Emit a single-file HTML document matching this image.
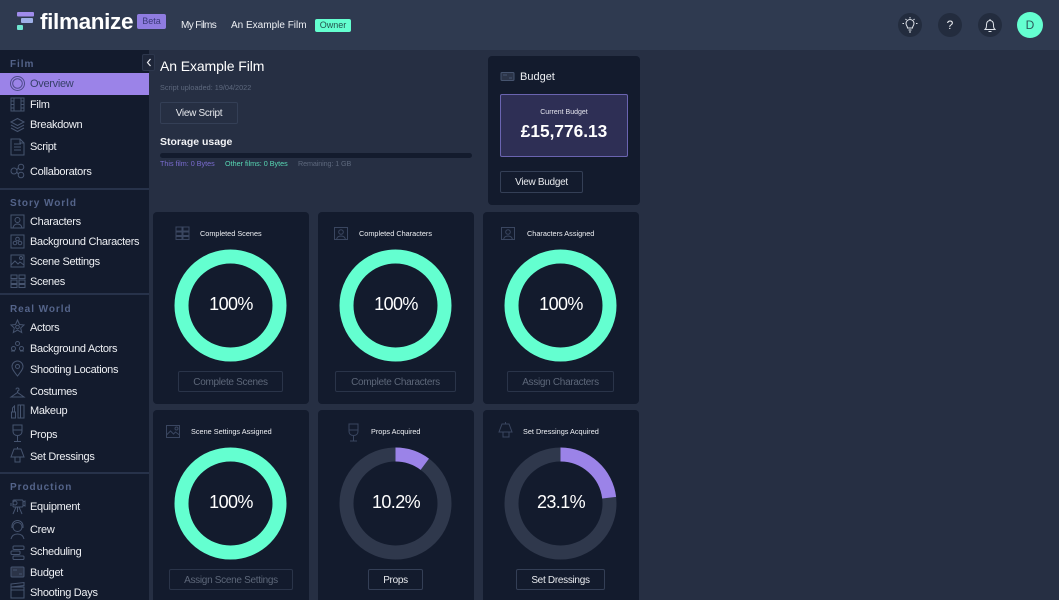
<!DOCTYPE html>
<html><head><meta charset="utf-8"><style>
*{box-sizing:border-box}
html,body{margin:0;padding:0;width:1059px;height:600px;overflow:hidden;background:#262f43;font-family:"Liberation Sans",sans-serif;color:#fff}
#w{position:relative;width:1059px;height:600px;overflow:hidden}
.a{position:absolute;white-space:nowrap}
.nav{position:absolute;left:30px;height:16px;line-height:16px;font-size:11px;color:#eef0f4;white-space:nowrap;letter-spacing:-.3px;margin-top:1px}
.h{position:absolute;left:10px;height:14px;line-height:14px;font-size:10px;font-weight:bold;letter-spacing:.95px;color:#54648a;white-space:nowrap}
.div{position:absolute;left:0;width:149px;height:2px;background:#27324a}
.card{position:absolute;background:#131b2d;border-radius:4px;width:156px}
.btn{position:absolute;border:1px solid #343f56;border-radius:2px;text-align:center;font-size:10px;letter-spacing:-.3px;height:21px;line-height:21px;white-space:nowrap;color:#e8eaee}
.btn.dis{color:#5d6779;border-color:#2a3449}
.ct{position:absolute;font-size:7.3px;height:10px;line-height:10px;color:#eef0f4;white-space:nowrap}
.pct{position:absolute;width:112px;text-align:center;font-size:18px;letter-spacing:-.6px;height:24px;line-height:24px;color:#fff}
</style></head><body><div id="w">
<!-- topbar -->
<div class="a" style="left:0;top:0;width:1059px;height:50px;background:#2f3a50"></div>
<svg class="a" style="left:16px;top:11px" width="20" height="20"><rect x="1" y="1" width="17" height="4.500" rx="1" fill="#a08cec"/><rect x="5" y="7" width="12" height="5" rx="1" fill="#9fb0e8"/><rect x="1" y="14" width="6" height="5" rx="1" fill="#6fe6d0"/></svg>
<div class="a" style="left:40px;top:8px;font-size:22.500px;font-weight:bold;line-height:28px;letter-spacing:-.35px;color:#fff">filmanize</div>
<div class="a" style="left:137px;top:14px;width:29px;height:15px;background:#8f7ce0;border-radius:2px;color:#3a3a78;font-size:9px;line-height:15px;text-align:center">Beta</div>
<div class="a" style="left:181px;top:19px;font-size:10px;line-height:14px;color:#eef0f4;letter-spacing:-.6px">My Films</div>
<div class="a" style="left:231px;top:19px;font-size:10px;line-height:14px;color:#eef0f4">An Example Film</div>
<div class="a" style="left:315px;top:19px;width:36px;height:13px;background:#64ffd0;border-radius:2px;color:#24534e;font-size:9px;line-height:13px;text-align:center">Owner</div>
<div class="a" style="left:898px;top:13px;width:24px;height:24px;border-radius:50%;background:#232c3e"></div>
<svg class="a" style="left:898px;top:13px" width="24" height="24" fill="none" stroke="#dfe3ea" stroke-width="1"><path d="M9.500 15c0-2-1.500-2.500-1.500-4.500a4 4 0 0 1 8 0c0 2-1.500 2.500-1.500 4.500z"/><path d="M10.500 17h3M11 19h2M12 4v1.500M6 10.500h-1.500M19.500 10.500H18M7.500 6l1 1M16.500 6l-1 1"/></svg>
<div class="a" style="left:938px;top:13px;width:24px;height:24px;border-radius:50%;background:#232c3e;text-align:center;line-height:24px;font-size:12px;color:#eef0f4">?</div>
<div class="a" style="left:978px;top:13px;width:24px;height:24px;border-radius:50%;background:#232c3e"></div>
<svg class="a" style="left:978px;top:13px" width="24" height="24" fill="none" stroke="#dfe3ea" stroke-width="1"><path d="M7 16.500h10c-1.200-1.200-1.500-2-1.500-5 0-2.300-1.400-4-3.500-4s-3.500 1.700-3.500 4c0 3-.3 3.800-1.500 5zM12 6v1.500M10.500 18.500h3"/></svg>
<div class="a" style="left:1017px;top:12px;width:26px;height:26px;border-radius:50%;background:#64ffd0;color:#2c5a5a;font-size:12px;line-height:26px;text-align:center">D</div>

<!-- sidebar -->
<div class="a" style="left:0;top:50px;width:149px;height:550px;background:#131b2d"></div>
<div class="a" style="left:0;top:73px;width:149px;height:22px;background:#9b83e8"></div>
<div class="h" style="top:58px">Film</div>
<div class="nav" style="top:75px;color:#37406a">Overview</div>
<div class="nav" style="top:96px">Film</div>
<div class="nav" style="top:116px">Breakdown</div>
<div class="nav" style="top:138px">Script</div>
<div class="nav" style="top:163px">Collaborators</div>
<div class="div" style="top:188px"></div>
<div class="h" style="top:197px">Story World</div>
<div class="nav" style="top:213px">Characters</div>
<div class="nav" style="top:233px">Background Characters</div>
<div class="nav" style="top:253px">Scene Settings</div>
<div class="nav" style="top:273px">Scenes</div>
<div class="div" style="top:293px"></div>
<div class="h" style="top:303px">Real World</div>
<div class="nav" style="top:319px">Actors</div>
<div class="nav" style="top:340px">Background Actors</div>
<div class="nav" style="top:361px">Shooting Locations</div>
<div class="nav" style="top:383px">Costumes</div>
<div class="nav" style="top:402px">Makeup</div>
<div class="nav" style="top:426px">Props</div>
<div class="nav" style="top:448px">Set Dressings</div>
<div class="div" style="top:472px"></div>
<div class="h" style="top:481px">Production</div>
<div class="nav" style="top:498px">Equipment</div>
<div class="nav" style="top:521px">Crew</div>
<div class="nav" style="top:543px">Scheduling</div>
<div class="nav" style="top:564px">Budget</div>
<div class="nav" style="top:584px">Shooting Days</div>

<!-- sidebar icons -->
<svg class="a" style="left:0;top:50px" width="30" height="550" fill="none" stroke="#46546f" stroke-width="1">
<g stroke="#4d4a8a"><circle cx="17.500" cy="33.500" r="7"/><circle cx="17.500" cy="33.500" r="4.800"/></g>
<g><rect x="11" y="48" width="13" height="13"/><path d="M14 48v13M21 48v13M11 51h3M11 54.500h3M11 58h3M21 51h3M21 54.500h3M21 58h3"/></g>
<g><path d="M11 72l6.500-3.500 6.500 3.500-6.500 3.500zM11 75l6.500 3.500L24 75M11 78l6.500 3.500L24 78"/></g>
<g><path d="M11 89h9l4 4v12H11zM20 89v4h4M14 94h7M14 97h7M14 100h7"/></g>
<g><circle cx="21" cy="117" r="2.800"/><circle cx="21" cy="125" r="2.800"/><circle cx="14" cy="121" r="3"/><path d="M16.500 120l2-2M16.500 122l2 2"/></g>
<g><rect x="11" y="165" width="13" height="13"/><circle cx="17.500" cy="170" r="2.500"/><path d="M13 178c.5-3 2.500-4 4.500-4s4 1 4.500 4"/></g>
<g><rect x="11" y="185" width="13" height="13"/><circle cx="17.500" cy="189" r="1.800"/><circle cx="15" cy="193" r="1.800"/><circle cx="20" cy="193" r="1.800"/></g>
<g><rect x="11" y="205" width="13" height="12"/><path d="M11 215l4-4 3 3 2-2 4 3"/><circle cx="21" cy="208" r="1.500"/></g>
<g><path d="M11 225h6v3.500h-6zM19 225h6v3.500h-6zM11 230h6v3.500h-6zM19 230h6v3.500h-6zM11 234.500h6v3h-6zM19 234.500h6v3h-6z"/></g>
<g><path d="M17.500 270l2 4.500 4.500.5-3.300 3 1 4.500-4.200-2.400-4.200 2.400 1-4.500-3.300-3 4.500-.5z"/><circle cx="17.500" cy="277" r="1.800"/></g>
<g><circle cx="17.500" cy="293.500" r="2"/><circle cx="13.500" cy="298.500" r="2"/><circle cx="21.500" cy="298.500" r="2"/><path d="M11 301h4M20 301h4"/></g>
<g><path d="M17.500 326c-3 -4-5.500-6.500-5.500-9.500a5.500 5.500 0 0 1 11 0c0 3-2.500 5.500-5.500 9.500z"/><circle cx="17.500" cy="316.500" r="2"/></g>
<g><path d="M11 347l6.500-4.500 6.500 4.500zM17.500 342.500v-1.500a1.500 1.500 0 1 0-1.500-1.500"/></g>
<g><rect x="11.500" y="362" width="4" height="6"/><path d="M12.500 362v-4l2-2v6"/><rect x="18" y="355" width="6" height="13"/><path d="M20.500 355v13"/></g>
<g><path d="M13 375h9v6c0 3-2 4.500-4.500 4.500S13 384 13 381zM17.500 385.500v6M14 391.500h7M13 380h9"/></g>
<g><path d="M14 399h7l3 8H11zM15 407v5h5v-5M17.500 397v2"/></g>
<g><rect x="13" y="450" width="10" height="7" rx="1"/><circle cx="15" cy="453" r="2"/><path d="M23 452l2-1v5l-2-1M11 453v3M16 457l-3 7M19 457l3 7M17.500 457v5"/></g>
<g><circle cx="17.500" cy="477" r="4.500"/><path d="M12 478v-2a5.500 5.500 0 0 1 11 0v2M11 489c1-4 3.500-5 6.500-5s5.500 1 6.500 5"/></g>
<g><rect x="13" y="496" width="11" height="3.500" rx="1"/><rect x="11" y="501" width="9" height="3.500" rx="1"/><rect x="13" y="506" width="11" height="3.500" rx="1"/></g>
<g><rect x="11" y="517" width="13" height="10" rx="1" fill="#2b3448"/><path d="M13 520h4M19 524h3"/></g>
<g><rect x="11" y="537" width="13" height="11"/><path d="M11 534l13-1.500v3l-13 1.500zM11 540h13"/></g>
</svg>

<!-- collapse -->
<div class="a" style="left:142px;top:54px;width:13px;height:17px;background:#1e2639;border:1px solid #2d374d;border-radius:2px"></div>
<svg class="a" style="left:142px;top:54px" width="13" height="17" fill="none" stroke="#e8eaee" stroke-width="1.200"><path d="M8.500 5l-3 3.500 3 3.500"/></svg>

<!-- header -->
<div class="a" style="left:160px;top:57px;font-size:14px;line-height:18px;color:#fff;letter-spacing:-.1px">An Example Film</div>
<div class="a" style="left:160px;top:82px;font-size:7.300px;line-height:11px;color:#5d687d">Script uploaded: 19/04/2022</div>
<div class="btn" style="left:160px;top:102px;width:78px;height:22px;line-height:21px">View Script</div>
<div class="a" style="left:160px;top:135px;font-size:10.500px;font-weight:bold;line-height:14px;color:#f2f3f6">Storage usage</div>
<div class="a" style="left:160px;top:153px;width:312px;height:5px;background:#131b2d;border-radius:3px"></div>
<div class="a" style="left:160px;top:158px;font-size:7.200px;line-height:12px;color:#7a6cd0">This film: 0 Bytes</div>
<div class="a" style="left:225px;top:158px;font-size:7.200px;line-height:12px;color:#58d9b4">Other films: 0 Bytes</div>
<div class="a" style="left:298px;top:158px;font-size:7.200px;letter-spacing:-.1px;line-height:12px;color:#5d687d">Remaining: 1 GB</div>

<!-- budget -->
<div class="card" style="left:488px;top:56px;width:152px;height:149px"></div>
<svg class="a" style="left:500px;top:70px" width="16" height="12" fill="none" stroke="#46546f"><rect x="1" y="2.500" width="13" height="8" rx="1" fill="#2b3448"/><path d="M3 5h4M9 8h3"/></svg>
<div class="a" style="left:520px;top:70px;font-size:11px;line-height:14px;color:#eef0f4">Budget</div>
<div class="a" style="left:500px;top:94px;width:128px;height:63px;background:#2e2f55;border:1px solid #6a64b0;border-radius:2px"></div>
<div class="a" style="left:500px;top:108px;width:128px;text-align:center;font-size:7px;line-height:10px;color:#e4e4ee">Current Budget</div>
<div class="a" style="left:500px;top:120px;width:128px;text-align:center;font-size:17.300px;font-weight:bold;line-height:22px;color:#fff">£15,776.13</div>
<div class="btn" style="left:500px;top:171px;width:83px;height:22px;line-height:21px">View Budget</div>

<!-- cards -->
<div class="card" style="left:153px;top:212px;height:192px"></div>
<div class="card" style="left:318px;top:212px;height:192px"></div>
<div class="card" style="left:483px;top:212px;height:192px"></div>
<div class="card" style="left:153px;top:410px;height:200px"></div>
<div class="card" style="left:318px;top:410px;height:200px"></div>
<div class="card" style="left:483px;top:410px;height:200px"></div>

<svg class="a" style="left:0;top:0" width="1059" height="600" fill="none">
<g stroke="#3a4660">
<path d="M176 227h6v4h-6zM183 227h6v4h-6zM176 232h6v3.500h-6zM183 232h6v3.500h-6zM176 236.500h6v3h-6zM183 236.500h6v3h-6z"/>
<rect x="334.500" y="227.500" width="13" height="12"/><circle cx="341" cy="232" r="2.300"/><path d="M336.500 239.500c.5-2.500 2.500-3.500 4.500-3.500s4 1 4.500 3.500"/>
<rect x="501.500" y="227.500" width="13" height="12"/><circle cx="508" cy="232" r="2.300"/><path d="M503.500 239.500c.5-2.500 2.500-3.500 4.500-3.500s4 1 4.500 3.500"/>
<rect x="166.500" y="425.500" width="13" height="12"/><path d="M166.500 435l4-4 3 3 2-2 4 3"/><circle cx="176.500" cy="428.500" r="1.500"/>
<path d="M349 424h9v7c0 3-2 4.500-4.500 4.500S349 434 349 431zM353.500 435.500v5M350 441h7M349 430h9"/>
<path d="M502 424h7l3 8h-13zM503 432h6v5h-6zM505.500 422v2"/>
</g>
<g stroke="#64ffd0" stroke-width="14">
<circle cx="230.500" cy="305.500" r="49"/>
<circle cx="395.500" cy="305.500" r="49"/>
<circle cx="560.500" cy="305.500" r="49"/>
<circle cx="230.500" cy="503.500" r="49"/>
</g>
<g stroke="#2f384c" stroke-width="14">
<circle cx="395.500" cy="503.500" r="49"/>
<circle cx="560.500" cy="503.500" r="49"/>
</g>
<g stroke="#9b83e8" stroke-width="14">
<circle cx="395.500" cy="503.500" r="49" pathLength="100" stroke-dasharray="10.200 89.800" transform="rotate(-90 395.500 503.500)"/>
<circle cx="560.500" cy="503.500" r="49" pathLength="100" stroke-dasharray="23.100 76.900" transform="rotate(-90 560.500 503.500)"/>
</g>
</svg>

<div class="ct" style="left:200px;top:229px">Completed Scenes</div>
<div class="ct" style="left:359px;top:229px">Completed Characters</div>
<div class="ct" style="left:527px;top:229px">Characters Assigned</div>
<div class="ct" style="left:191px;top:427px">Scene Settings Assigned</div>
<div class="ct" style="left:371px;top:427px">Props Acquired</div>
<div class="ct" style="left:523px;top:427px">Set Dressings Acquired</div>

<div class="pct" style="left:175px;top:292px">100%</div>
<div class="pct" style="left:340px;top:292px">100%</div>
<div class="pct" style="left:505px;top:292px">100%</div>
<div class="pct" style="left:175px;top:490px">100%</div>
<div class="pct" style="left:340px;top:490px">10.2%</div>
<div class="pct" style="left:505px;top:490px">23.1%</div>

<div class="btn dis" style="left:178px;top:371px;width:105px">Complete Scenes</div>
<div class="btn dis" style="left:335px;top:371px;width:121px">Complete Characters</div>
<div class="btn dis" style="left:507px;top:371px;width:107px">Assign Characters</div>
<div class="btn dis" style="left:169px;top:569px;width:124px">Assign Scene Settings</div>
<div class="btn" style="left:368px;top:569px;width:55px">Props</div>
<div class="btn" style="left:516px;top:569px;width:89px">Set Dressings</div>
</div></body></html>
